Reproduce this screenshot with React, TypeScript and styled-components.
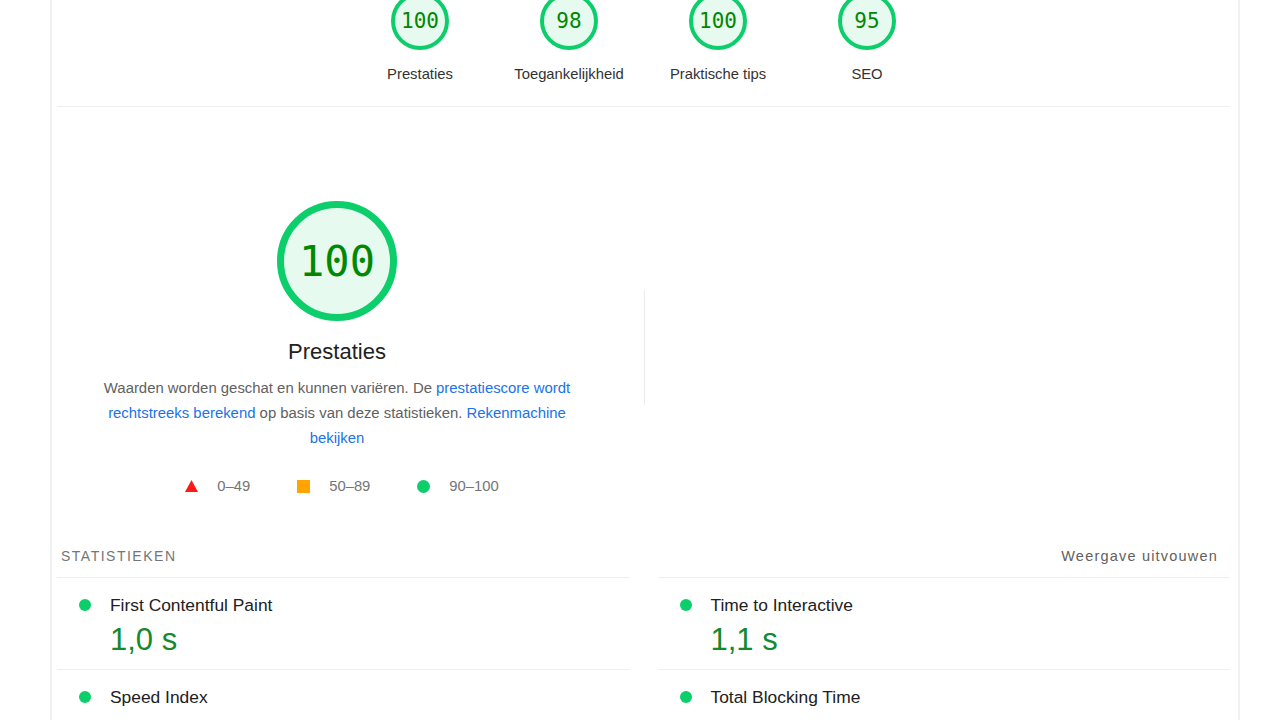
import styled, { createGlobalStyle } from "styled-components";

const GlobalStyle = createGlobalStyle`
  html, body {
    margin: 0;
    padding: 0;
    height: 100%;
    overflow: hidden;
    background: #ffffff;
  }
  body {
    font-family: "Liberation Sans", Arial, Helvetica, sans-serif;
    color: #212121;
  }
`;

const Panel = styled.main`
  box-sizing: border-box;
  margin-left: 50px;
  width: 1190px;
  min-height: 100vh;
  padding: 0 8px 0 5px;
  border-left: 2px solid #f1f1f1;
  border-right: 2px solid #f1f1f1;
`;

const ScoreRow = styled.section`
  margin-top: -8px;
  display: flex;
  justify-content: center;
  padding-bottom: 22px;
  border-bottom: 1px solid #efefef;
`;

const GaugeItem = styled.div`
  width: 149px;
  display: flex;
  flex-direction: column;
  align-items: center;
`;

const Gauge = styled.div<{ $size: number; $stroke: number; $font: number }>`
  box-sizing: border-box;
  width: ${(p) => p.$size}px;
  height: ${(p) => p.$size}px;
  border-radius: 50%;
  border: ${(p) => p.$stroke}px solid #0cce6b;
  background: #e7faf0;
  display: flex;
  align-items: center;
  justify-content: center;
  font-family: "DejaVu Sans Mono", "Liberation Mono", monospace;
  font-size: ${(p) => p.$font}px;
  color: #008800;
`;

const GaugeLabel = styled.div`
  margin-top: 14px;
  font-size: 14.8px;
  line-height: 20px;
  color: #333333;
`;

const PerfHeader = styled.section`
  display: flex;
  align-items: flex-start;
`;

const PerfSummary = styled.div`
  width: 560px;
  padding-top: 94px;
  display: flex;
  flex-direction: column;
  align-items: center;
`;

const PerfTitle = styled.h2`
  margin: 17px 0 0;
  font-size: 22px;
  line-height: 28px;
  font-weight: 400;
  color: #212121;
`;

const PerfText = styled.p`
  margin: 10px 0 0;
  max-width: 500px;
  text-align: center;
  font-size: 14.9px;
  line-height: 25px;
  color: #616161;
`;

const Link = styled.a`
  color: #1a73e8;
  text-decoration: none;
`;

const Legend = styled.div`
  display: flex;
  gap: 47px;
  margin: 25px 0 0 10px;
`;

const LegendItem = styled.div`
  display: flex;
  align-items: center;
  gap: 19px;
  font-size: 14.8px;
  line-height: 20px;
  color: #757575;
`;

const VDivider = styled.div`
  width: 1px;
  height: 115px;
  margin: 183px 0 0 27px;
  background: #ececec;
`;

const Metrics = styled.section`
  margin-top: 50px;
`;

const MetricsHeader = styled.div`
  display: flex;
  justify-content: space-between;
  padding: 0 12px 11px 4px;
  font-size: 14px;
  line-height: 20px;
`;

const SectionTitle = styled.span`
  text-transform: uppercase;
  letter-spacing: 1.5px;
  color: #757575;
`;

const ToggleView = styled.span`
  font-size: 14.5px;
  letter-spacing: 1.2px;
  color: #616161;
`;

const MetricGrid = styled.div`
  display: grid;
  grid-template-columns: 1fr 1fr;
  column-gap: 28px;
`;

const MetricColumn = styled.div`
  border-top: 1px solid #efefef;
`;

const MetricRow = styled.div`
  display: grid;
  grid-template-columns: 12px 1fr;
  column-gap: 19px;
  align-items: center;
  padding: 17px 0 11px 22px;
  border-bottom: 1px solid #efefef;
`;

const Dot = styled.span`
  width: 12px;
  height: 12px;
  border-radius: 50%;
  background: #0cce6b;
`;

const MetricLabel = styled.div`
  font-size: 17.4px;
  line-height: 20px;
  color: #212121;
`;

const MetricValue = styled.div`
  grid-column: 2;
  margin-top: 7px;
  font-size: 31px;
  line-height: 36px;
  color: #138a2c;
`;

const scores = [
  { value: 100, label: "Prestaties" },
  { value: 98, label: "Toegankelijkheid" },
  { value: 100, label: "Praktische tips" },
  { value: 95, label: "SEO" },
];

const leftMetrics = [
  { label: "First Contentful Paint", value: "1,0 s" },
  { label: "Speed Index", value: "1,0 s" },
  { label: "Largest Contentful Paint", value: "1,2 s" },
];

const rightMetrics = [
  { label: "Time to Interactive", value: "1,1 s" },
  { label: "Total Blocking Time", value: "0 ms" },
  { label: "Cumulative Layout Shift", value: "0" },
];

const Metric = ({ label, value }: { label: string; value: string }) => (
  <MetricRow>
    <Dot />
    <MetricLabel>{label}</MetricLabel>
    <MetricValue>{value}</MetricValue>
  </MetricRow>
);

export default function App() {
  return (
    <>
      <GlobalStyle />
      <Panel>
        <ScoreRow>
          {scores.map((s) => (
            <GaugeItem key={s.label}>
              <Gauge $size={58} $stroke={4} $font={21}>
                {s.value}
              </Gauge>
              <GaugeLabel>{s.label}</GaugeLabel>
            </GaugeItem>
          ))}
        </ScoreRow>

        <PerfHeader>
          <PerfSummary>
            <Gauge $size={120} $stroke={7} $font={42}>
              100
            </Gauge>
            <PerfTitle>Prestaties</PerfTitle>
            <PerfText>
              Waarden worden geschat en kunnen variëren. De{" "}
              <Link href="#">prestatiescore wordt rechtstreeks berekend</Link> op basis van
              deze statistieken. <Link href="#">Rekenmachine bekijken</Link>
            </PerfText>
            <Legend>
              <LegendItem>
                <svg width="13" height="12" viewBox="0 0 13 12">
                  <polygon points="6.5,0 13,12 0,12" fill="#ff1a1a" />
                </svg>
                0–49
              </LegendItem>
              <LegendItem>
                <svg width="13" height="13" viewBox="0 0 13 13">
                  <rect width="13" height="13" fill="#ffa400" />
                </svg>
                50–89
              </LegendItem>
              <LegendItem>
                <svg width="13" height="13" viewBox="0 0 13 13">
                  <circle cx="6.5" cy="6.5" r="6.5" fill="#0cce6b" />
                </svg>
                90–100
              </LegendItem>
            </Legend>
          </PerfSummary>
          <VDivider />
        </PerfHeader>

        <Metrics>
          <MetricsHeader>
            <SectionTitle>Statistieken</SectionTitle>
            <ToggleView>Weergave uitvouwen</ToggleView>
          </MetricsHeader>
          <MetricGrid>
            <MetricColumn>
              {leftMetrics.map((m) => (
                <Metric key={m.label} {...m} />
              ))}
            </MetricColumn>
            <MetricColumn>
              {rightMetrics.map((m) => (
                <Metric key={m.label} {...m} />
              ))}
            </MetricColumn>
          </MetricGrid>
        </Metrics>
      </Panel>
    </>
  );
}
